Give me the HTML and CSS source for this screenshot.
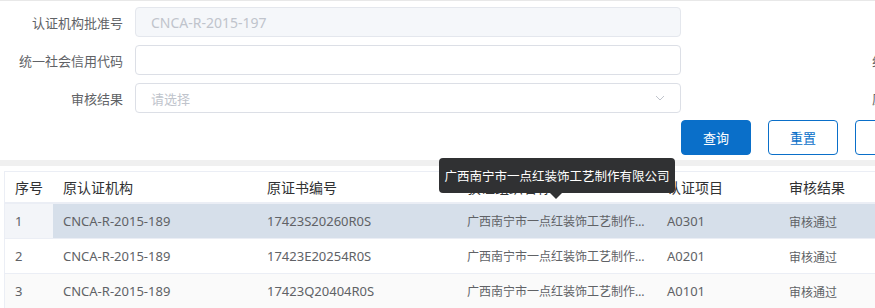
FILE: index.html
```html
<!DOCTYPE html>
<html lang="zh-CN">
<head>
<meta charset="utf-8">
<link rel="stylesheet" href="styles.css">
</head>
<body>
<div class="page">
  <div class="form">
    <div class="form-grid">
      <div class="field">
        <label class="label">认证机构批准号</label>
        <div class="input disabled"><span class="lat">CNCA-R-2015-197</span></div>
      </div>
      <div class="field">
        <label class="label">认证项目</label>
        <div class="input"></div>
      </div>
      <div class="field">
        <label class="label">统一社会信用代码</label>
        <div class="input"></div>
      </div>
      <div class="field">
        <label class="label">组织机构代码号</label>
        <div class="input"></div>
      </div>
      <div class="field">
        <label class="label">审核结果</label>
        <div class="input select"><span class="placeholder">请选择</span>
          <svg class="chev" width="10" height="6" viewBox="0 0 10 6"><path d="M1 1 L5 5 L9 1" fill="none" stroke="#c0c4cc" stroke-width="1"/></svg>
        </div>
      </div>
      <div class="field">
        <label class="label">原认证证书编号</label>
        <div class="input"></div>
      </div>
    </div>
    <div class="actions">
      <button class="btn primary">查询</button>
      <button class="btn">重置</button>
      <button class="btn">导出</button>
    </div>
  </div>
  <div class="band"></div>
  <div class="table-wrap">
    <div class="table">
      <div class="row head">
        <div class="cell c1">序号</div>
        <div class="cell c2">原认证机构</div>
        <div class="cell c3">原证书编号</div>
        <div class="cell c4">获证组织名称</div>
        <div class="cell c5">认证项目</div>
        <div class="cell c6">审核结果</div>
      </div>
      <div class="row hover">
        <div class="cell c1 lat">1</div>
        <div class="cell c2 lat">CNCA-R-2015-189</div>
        <div class="cell c3 lat">17423S20260R0S</div>
        <div class="cell c4"><span class="ell">广西南宁市一点红装饰工艺制作有限公司</span></div>
        <div class="cell c5 lat">A0301</div>
        <div class="cell c6">审核通过</div>
      </div>
      <div class="row">
        <div class="cell c1 lat">2</div>
        <div class="cell c2 lat">CNCA-R-2015-189</div>
        <div class="cell c3 lat">17423E20254R0S</div>
        <div class="cell c4"><span class="ell">广西南宁市一点红装饰工艺制作有限公司</span></div>
        <div class="cell c5 lat">A0201</div>
        <div class="cell c6">审核通过</div>
      </div>
      <div class="row stripe">
        <div class="cell c1 lat">3</div>
        <div class="cell c2 lat">CNCA-R-2015-189</div>
        <div class="cell c3 lat">17423Q20404R0S</div>
        <div class="cell c4"><span class="ell">广西南宁市一点红装饰工艺制作有限公司</span></div>
        <div class="cell c5 lat">A0101</div>
        <div class="cell c6">审核通过</div>
      </div>
    </div>
  </div>
  <div class="tooltip">广西南宁市一点红装饰工艺制作有限公司<span class="arrow"></span></div>
</div>
</body>
</html>
```
FILE: styles.css
```css
html, body {
  margin: 0;
  padding: 0;
  background: #fff;
  overflow: hidden;
}
body {
  font-family: "Noto Sans", "Noto Sans CJK SC", sans-serif;
  color: #606266;
  width: 875px;
  height: 308px;
}
.page {
  position: relative;
  width: 875px;
  height: 308px;
  overflow: hidden;
  border-top: 1px solid #e8e8e8;
  box-sizing: border-box;
}
.form {
  padding-top: 6px;
}
.form-grid {
  display: grid;
  grid-template-columns: 681px 681px;
  column-gap: 159px;
  row-gap: 8px;
}
.field {
  display: flex;
  align-items: center;
  height: 30px;
}
.label {
  width: 123px;
  padding-right: 12px;
  text-align: right;
  font-family: "Noto Sans CJK SC", sans-serif;
  font-size: 13px;
  color: #606266;
  white-space: nowrap;
  flex: none;
}
.input {
  flex: 1;
  height: 30px;
  box-sizing: border-box;
  border: 1px solid #dcdfe6;
  border-radius: 4px;
  background: #fff;
  font-size: 13px;
  padding: 0 15px;
  display: flex;
  align-items: center;
}
.input .lat {
  font-size: 14px;
}
.input.disabled {
  background: #f5f7fa;
  border-color: #e4e7ed;
  color: #c0c4cc;
}
.select {
  justify-content: space-between;
}
.placeholder {
  color: #c0c4cc;
  font-family: "Noto Sans CJK SC", sans-serif;
}
.chev {
  margin-right: 0;
}
.actions {
  display: flex;
  gap: 17px;
  padding-left: 681px;
  margin-top: 7px;
}
.btn {
  width: 70px;
  height: 35px;
  flex: none;
  box-sizing: border-box;
  border: 1px solid #0a6fc9;
  border-radius: 4px;
  background: #fff;
  color: #0a6fc9;
  font-family: "Noto Sans CJK SC", sans-serif;
  font-size: 13px;
  padding: 0;
}
.btn.primary {
  background: #0a6fc9;
  color: #fff;
}
.band {
  height: 6px;
  margin-top: 5px;
  background: #f0f0f0;
}
.table-wrap {
  padding: 5px 0 0 4px;
}
.table {
  width: 1000px;
  border-left: 1px solid #ebeef5;
  border-top: 1px solid #ebeef5;
}
.row {
  display: flex;
  height: 35px;
  border-bottom: 1px solid #ebeef5;
  box-sizing: border-box;
  background: #fff;
}
.row.head {
  height: 32px;
  border-bottom-width: 2px;
  color: #303133;
}
.row.stripe {
  background: #fafafa;
}
.row.hover {
  background: #d6dfea;
}
.row.hover .c1 {
  background: #f3f5f9;
}
.cell {
  display: flex;
  align-items: center;
  padding-left: 10px;
  box-sizing: border-box;
  font-family: "Noto Sans CJK SC", sans-serif;
  font-size: 12px;
  white-space: nowrap;
  overflow: hidden;
}
.cell.lat {
  font-family: "Noto Sans", sans-serif;
  font-size: 13px;
}
.row.head .cell {
  font-size: 14px;
}
.c1 { width: 48px; }
.c2 { width: 204px; }
.c3 { width: 200px; }
.c4 { width: 200px; padding-right: 10px; }
.c5 { width: 122px; }
.c6 { width: 200px; }
.ell {
  display: block;
  overflow: hidden;
  text-overflow: ellipsis;
  white-space: nowrap;
  width: 100%;
  font-family: "Noto Sans", "Noto Sans CJK SC", sans-serif;
}
.tooltip {
  position: absolute;
  left: 439px;
  top: 157px;
  width: 236px;
  height: 35px;
  box-sizing: border-box;
  background: #303133;
  color: #fff;
  border-radius: 4px;
  font-family: "Noto Sans CJK SC", sans-serif;
  font-size: 12.5px;
  display: flex;
  align-items: center;
  justify-content: center;
}
.arrow {
  position: absolute;
  left: 111px;
  bottom: -6px;
  width: 0;
  height: 0;
  border-left: 6px solid transparent;
  border-right: 6px solid transparent;
  border-top: 6px solid #303133;
}
```
